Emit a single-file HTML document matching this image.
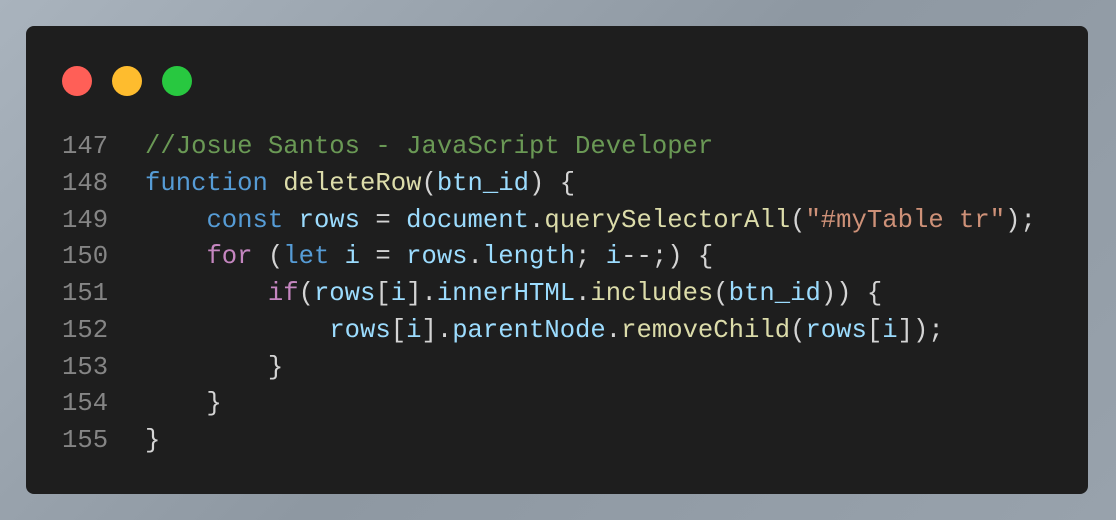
<!DOCTYPE html>
<html><head><style>
html,body{margin:0;width:1116px;height:520px;overflow:hidden;background:linear-gradient(135deg,#a9b3bd,#8e98a2 50%,#98a2ac);}
.card{position:absolute;left:26px;top:26px;width:1062px;height:468px;background:#1e1e1e;border-radius:8px;}
.dot{position:absolute;top:40px;width:30px;height:30px;border-radius:50%;}
pre{position:absolute;left:36px;top:103px;margin:0;font-family:"Liberation Mono",monospace;font-size:25.6px;line-height:36.75px;color:#d4d4d4;}
.n{color:#858585;display:inline-block;width:83px}.c{color:#6a9955}.k{color:#569cd6}.f{color:#dcdcaa}.v{color:#9cdcfe}.s{color:#ce9178}.p{color:#c586c0}
</style></head><body>
<div class="card">
<div class="dot" style="left:36px;background:#ff5f57"></div>
<div class="dot" style="left:86px;background:#febc2e"></div>
<div class="dot" style="left:136px;background:#28c840"></div>
<pre><span class="n">147</span><span class="c">//Josue Santos - JavaScript Developer</span>
<span class="n">148</span><span class="k">function</span> <span class="f">deleteRow</span>(<span class="v">btn_id</span>) {
<span class="n">149</span>    <span class="k">const</span> <span class="v">rows</span> = <span class="v">document</span>.<span class="f">querySelectorAll</span>(<span class="s">"#myTable tr"</span>);
<span class="n">150</span>    <span class="p">for</span> (<span class="k">let</span> <span class="v">i</span> = <span class="v">rows</span>.<span class="v">length</span>; <span class="v">i</span>--;) {
<span class="n">151</span>        <span class="p">if</span>(<span class="v">rows</span>[<span class="v">i</span>].<span class="v">innerHTML</span>.<span class="f">includes</span>(<span class="v">btn_id</span>)) {
<span class="n">152</span>            <span class="v">rows</span>[<span class="v">i</span>].<span class="v">parentNode</span>.<span class="f">removeChild</span>(<span class="v">rows</span>[<span class="v">i</span>]);
<span class="n">153</span>        }
<span class="n">154</span>    }
<span class="n">155</span>}</pre>
</div>
</body></html>
